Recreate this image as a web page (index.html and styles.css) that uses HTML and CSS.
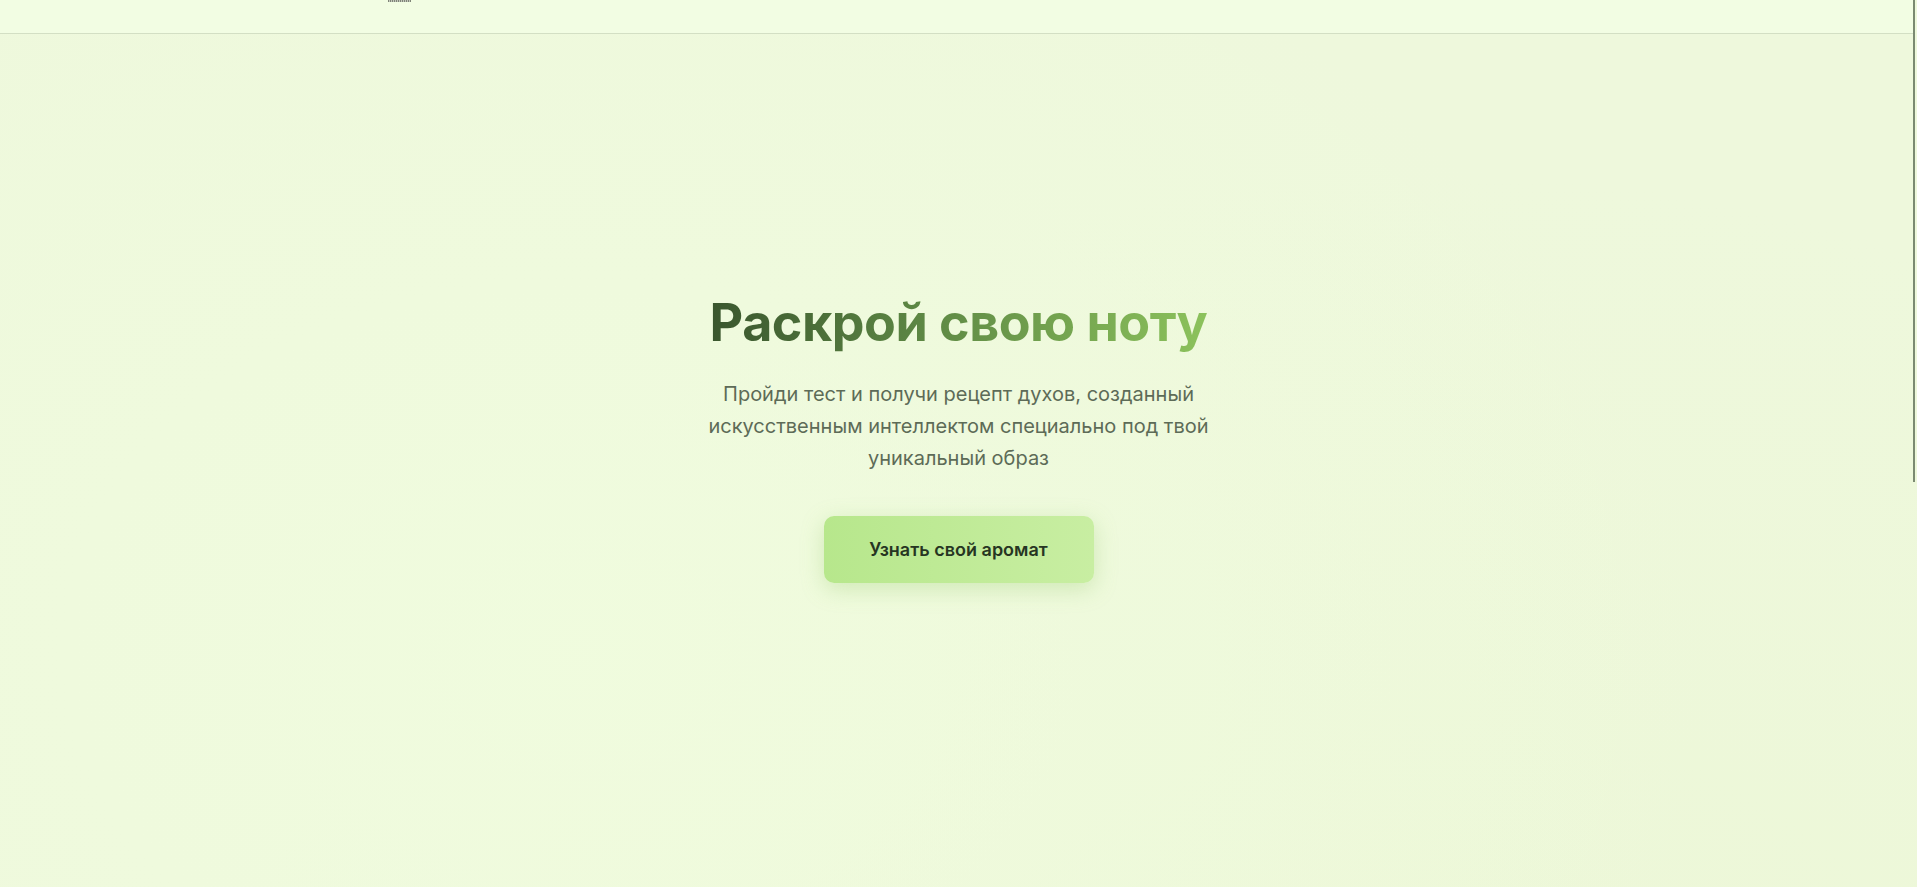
FILE: index.html
```html
<!DOCTYPE html>
<html lang="ru">
<head>
<meta charset="utf-8">
<title>Раскрой свою ноту</title>
<link rel="stylesheet" href="styles.css">
</head>
<body>
<header class="site-header">
  <div class="header-inner">
    <span class="logo-fragment"></span>
  </div>
</header>
<main class="hero">
  <div class="hero-content">
    <h1 class="hero-title">Раскрой свою ноту</h1>
    <p class="hero-text">Пройди тест и получи рецепт духов, созданный искусственным интеллектом специально под твой уникальный образ</p>
    <button class="hero-button">Узнать свой аромат</button>
  </div>
</main>
<section class="below"></section>
<div class="scroll-thumb"></div>
</body>
</html>
```
FILE: styles.css
```css
html {
  background: #eef8dc;
}
body {
  margin: 0;
  font-family: Inter, "Noto Sans", sans-serif;
  background:
    radial-gradient(ellipse at 30% 40%, rgba(240, 252, 222, 0.9), rgba(240, 252, 222, 0) 60%),
    radial-gradient(ellipse at 75% 70%, rgba(236, 247, 214, 0.9), rgba(236, 247, 214, 0) 60%),
    #eef8dc;
}
.site-header {
  height: 33px;
  margin-right: 4px;
  background: #f2fde3;
  border-bottom: 1px solid #d3dfc4;
}
.header-inner {
  padding-left: 388px;
}
.logo-fragment {
  display: block;
  width: 23px;
  height: 2px;
  background: repeating-linear-gradient(90deg, #7f8478 0 1px, #c3c8bb 1px 2px);
}
.hero {
  min-height: calc(100vh - 34px);
  display: flex;
  align-items: center;
  justify-content: center;
}
.hero-content {
  display: flex;
  flex-direction: column;
  align-items: center;
  text-align: center;
  padding-bottom: 46px;
}
.hero-title {
  margin: 0 0 23px;
  font-size: 52px;
  line-height: 1.2;
  font-weight: 700;
  letter-spacing: -0.5px;
  background: linear-gradient(90deg, #3a562e 0%, #5f8a45 45%, #8cc25c 100%);
  -webkit-background-clip: text;
  background-clip: text;
  color: transparent;
}
.hero-text {
  margin: 0 0 42px;
  max-width: 510px;
  font-size: 20px;
  line-height: 32px;
  color: #5d6b57;
}
.hero-button {
  width: 270px;
  height: 67px;
  border: none;
  border-radius: 10px;
  font-family: Inter, "Noto Sans", sans-serif;
  font-size: 18px;
  font-weight: 600;
  color: #263522;
  background: linear-gradient(90deg, #b7e78c, #c8eea2);
  box-shadow: 0 6px 22px rgba(150, 200, 110, 0.35);
  cursor: pointer;
}
.below {
  height: 745px;
}
.scroll-thumb {
  position: fixed;
  top: 0;
  right: 2px;
  width: 2px;
  height: 482px;
  background: #7b8a72;
}
```
